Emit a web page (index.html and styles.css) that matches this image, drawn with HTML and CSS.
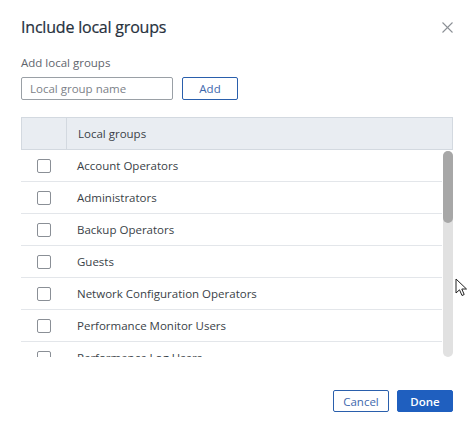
FILE: index.html
```html
<!DOCTYPE html>
<html lang="en">
  <head>
    <meta charset="UTF-8" />
    <meta name="viewport" content="width=device-width, initial-scale=1.0" />
    <title>Include local groups</title>
    <link rel="stylesheet" href="styles.css">
  </head>
  <body>
    <div class="dialog">
      <div class="dialog-head">
        <h1 class="dialog-title">Include local groups</h1>
        <button class="close-btn" aria-label="Close">
          <svg width="11" height="11" viewBox="0 0 11 11" fill="none" stroke="currentColor" stroke-width="1.1">
            <line x1="0.5" y1="0.5" x2="10.5" y2="10.5"></line>
            <line x1="10.5" y1="0.5" x2="0.5" y2="10.5"></line>
          </svg>
        </button>
      </div>

      <label class="field-label" for="group-name">Add local groups</label>
      <div class="add-row">
        <input id="group-name" class="text-input" type="text" placeholder="Local group name">
        <button class="btn btn-outline btn-add">Add</button>
      </div>

      <div class="groups-table">
        <div class="table-head">
          <div class="col-check"></div>
          <div class="col-name">Local groups</div>
        </div>
        <div class="table-body">
          <div class="rows">
            <div class="row"><div class="col-check"><span class="checkbox"></span></div><div class="col-name">Account Operators</div></div>
            <div class="row"><div class="col-check"><span class="checkbox"></span></div><div class="col-name">Administrators</div></div>
            <div class="row"><div class="col-check"><span class="checkbox"></span></div><div class="col-name">Backup Operators</div></div>
            <div class="row"><div class="col-check"><span class="checkbox"></span></div><div class="col-name">Guests</div></div>
            <div class="row"><div class="col-check"><span class="checkbox"></span></div><div class="col-name">Network Configuration Operators</div></div>
            <div class="row"><div class="col-check"><span class="checkbox"></span></div><div class="col-name">Performance Monitor Users</div></div>
            <div class="row"><div class="col-check"><span class="checkbox"></span></div><div class="col-name">Performance Log Users</div></div>
            <div class="row"><div class="col-check"><span class="checkbox"></span></div><div class="col-name">Power Users</div></div>
            <div class="row"><div class="col-check"><span class="checkbox"></span></div><div class="col-name">Print Operators</div></div>
            <div class="row"><div class="col-check"><span class="checkbox"></span></div><div class="col-name">Remote Desktop Users</div></div>
          </div>
          <div class="scrollbar">
            <div class="scroll-thumb"></div>
          </div>
        </div>
      </div>

      <div class="dialog-foot">
        <button class="btn btn-outline">Cancel</button>
        <button class="btn btn-primary">Done</button>
      </div>
    </div>

    <!-- mouse pointer as captured in the screenshot -->
    <svg class="pointer" width="14" height="20" viewBox="0 0 14 20">
      <path d="M1 1 L1 15 L4.5 11.8 L7 17.5 L9.2 16.5 L6.8 11 L11.5 11 Z" fill="#fff" stroke="#222" stroke-width="1" stroke-linejoin="round"></path>
    </svg>
  </body>
</html>
```

FILE: styles.css
```css
:root {
  --text: #3a3f47;
  --title: #27313d;
  --muted: #5f656d;
  --blue: #2a5fac;
  --blue-solid: #1f5fbf;
  --line: #e3e6ea;
  --head-bg: #e9edf2;
  --head-line: #d3d9e0;
}

html, body {
  margin: 0;
  padding: 0;
  background: #ffffff;
}

body {
  font-family: "Open Sans", "Noto Sans", sans-serif;
  color: var(--text);
  width: 473px;
  height: 426px;
  overflow: hidden;
  position: relative;
}

.dialog {
  padding: 14px 20px 0 21px;
}

.dialog-head {
  display: flex;
  align-items: center;
  justify-content: space-between;
  height: 26px;
}

.dialog-title {
  margin: 0;
  font-size: 16px;
  font-weight: 400;
  color: var(--title);
  letter-spacing: -0.2px;
  -webkit-text-stroke: 0.2px var(--title);
}

.close-btn {
  border: 0;
  background: none;
  padding: 0;
  width: 11px;
  height: 11px;
  color: #8c9096;
  display: flex;
}

.field-label {
  display: block;
  margin-top: 15px;
  font-size: 11.5px;
  color: var(--muted);
  line-height: 16px;
}

.add-row {
  display: flex;
  gap: 9px;
  margin-top: 6px;
}

.text-input {
  box-sizing: border-box;
  width: 152px;
  height: 23px;
  border: 1px solid #9aa0a6;
  border-radius: 2px;
  padding: 0 8px;
  font-family: inherit;
  font-size: 11.5px;
  color: var(--text);
  outline: none;
}

.text-input::placeholder {
  color: #7c8188;
}

.btn {
  box-sizing: border-box;
  height: 22px;
  border-radius: 2px;
  font-family: inherit;
  font-size: 11.5px;
  padding: 0;
  cursor: pointer;
}

.btn-outline {
  border: 1px solid var(--blue);
  background: #fff;
  color: #3e68ad;
}

.btn-add {
  width: 56px;
  height: 23px;
}

.groups-table {
  margin-top: 17px;
  width: 432px;
}

.table-head {
  display: flex;
  height: 33px;
  box-sizing: border-box;
  background: var(--head-bg);
  border: 1px solid var(--head-line);
  font-size: 11.5px;
  color: var(--text);
}

.table-head .col-check {
  width: 44px;
  border-right: 1px solid var(--head-line);
}

.table-head .col-name {
  display: flex;
  align-items: center;
  padding-left: 11px;
}

.table-body {
  display: flex;
  gap: 1px;
  height: 207px;
}

.rows {
  flex: 1;
  overflow: hidden;
}

.scrollbar {
  width: 10px;
  margin-top: 1px;
  background: #e1e1e1;
  border-radius: 5px;
}

.scroll-thumb {
  height: 72px;
  background: #a7a7a7;
  border-radius: 5px;
}

.row {
  display: flex;
  align-items: center;
  height: 32px;
  box-sizing: border-box;
  border-bottom: 1px solid var(--line);
  font-size: 11.5px;
}

.row .col-check {
  width: 45px;
  display: flex;
  justify-content: center;
  padding-left: 1px;
  box-sizing: border-box;
}

.row .col-name {
  padding-left: 11px;
}

.checkbox {
  box-sizing: border-box;
  width: 14px;
  height: 14px;
  border: 1px solid #8a8f96;
  border-radius: 2px;
  background: #fff;
}

.dialog-foot {
  display: flex;
  justify-content: flex-end;
  gap: 8px;
  margin-top: 33px;
}

.dialog-foot .btn {
  width: 56px;
}

.btn-primary {
  border: 1px solid var(--blue-solid);
  background: var(--blue-solid);
  color: #fff;
  font-weight: 600;
}

.pointer {
  position: absolute;
  left: 455px;
  top: 278px;
}
```
